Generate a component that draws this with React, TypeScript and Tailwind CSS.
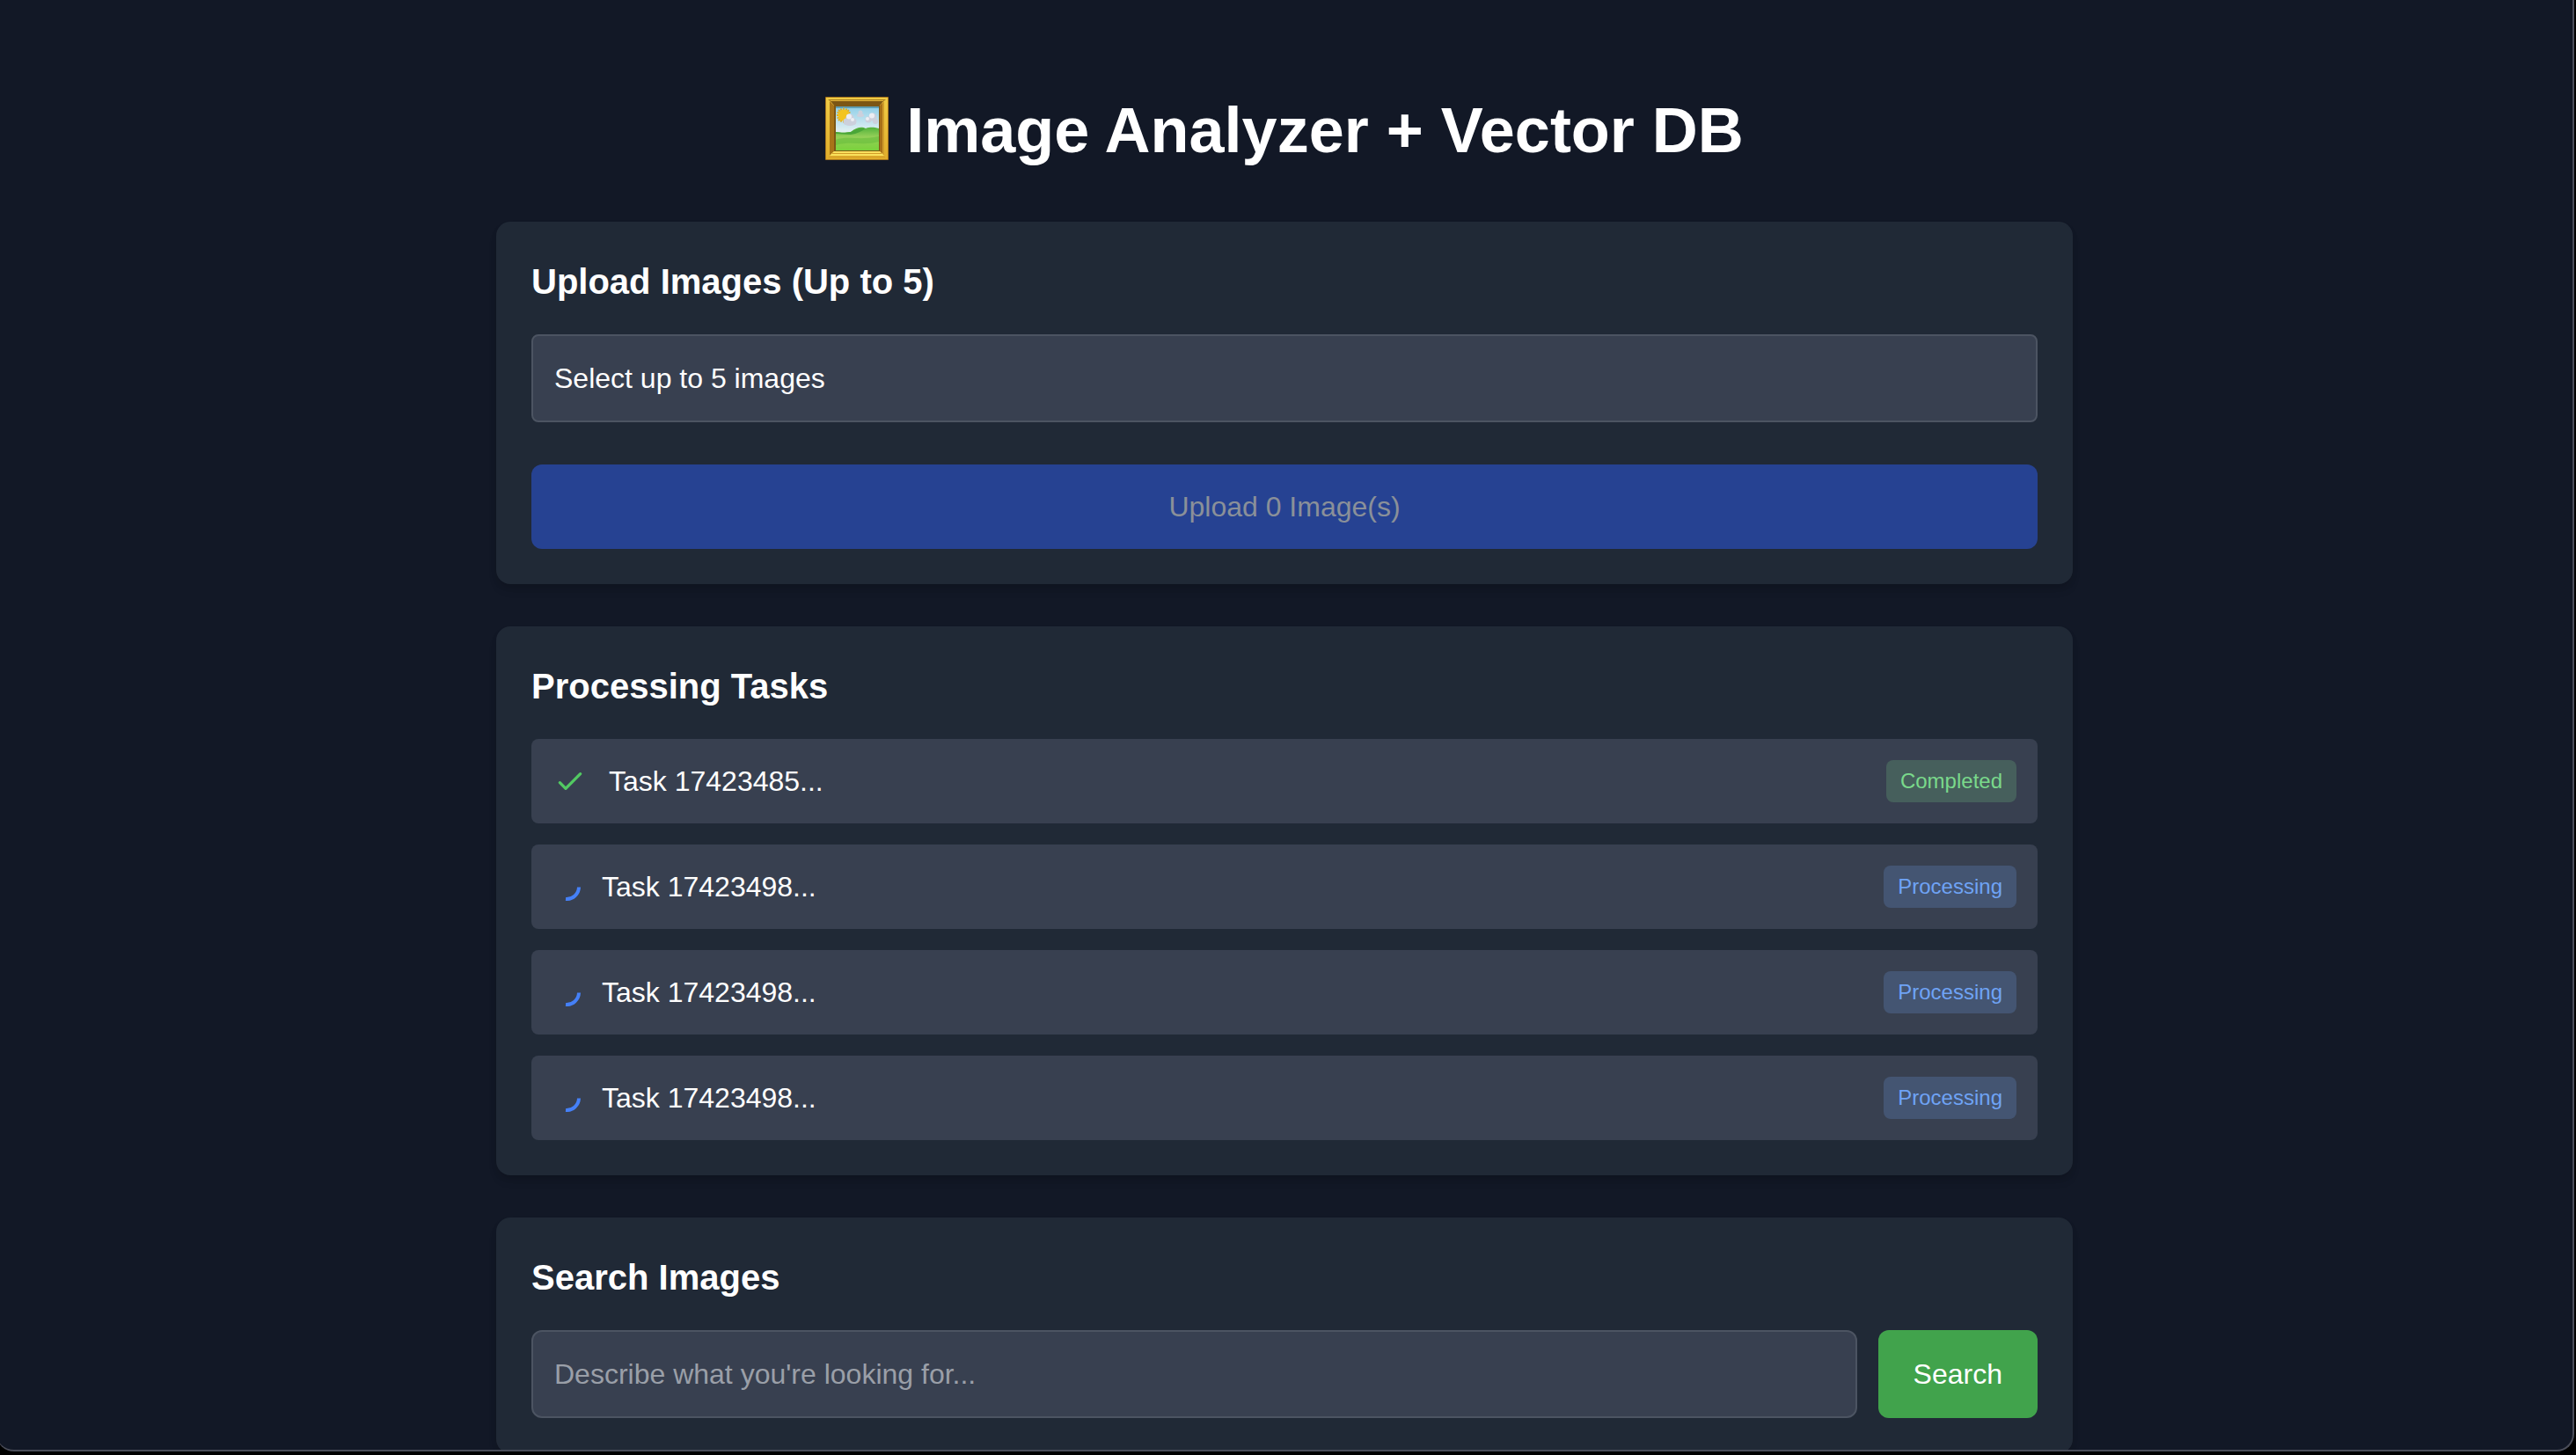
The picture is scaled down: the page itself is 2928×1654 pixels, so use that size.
import { useId } from "react";

type Task = { id: string; label: string; status: "Completed" | "Processing" };

const tasks: Task[] = [
  { id: "t1", label: "Task 17423485...", status: "Completed" },
  { id: "t2", label: "Task 17423498...", status: "Processing" },
  { id: "t3", label: "Task 17423498...", status: "Processing" },
  { id: "t4", label: "Task 17423498...", status: "Processing" },
];

function FramedPicture() {
  return (
    <svg className="mb-1 h-[72px] w-[72px] shrink-0" viewBox="0 0 72 72" aria-hidden="true">
      <defs>
        <linearGradient id="sky" x1="0" y1="0" x2="0" y2="1">
          <stop offset="0" stopColor="#8fcfe8" />
          <stop offset="0.6" stopColor="#e6f1f2" />
        </linearGradient>
        <linearGradient id="grass" x1="0" y1="0" x2="0" y2="1">
          <stop offset="0" stopColor="#52b23c" />
          <stop offset="0.4" stopColor="#93cf58" />
          <stop offset="1" stopColor="#7bd23c" />
        </linearGradient>
        <linearGradient id="gold" x1="0" y1="0" x2="0" y2="1">
          <stop offset="0" stopColor="#efcb45" />
          <stop offset="1" stopColor="#e0ad2b" />
        </linearGradient>
      </defs>
      <rect width="72" height="72" rx="1" fill="#a8741a" />
      <rect x="1" y="1" width="70" height="70" fill="url(#gold)" />
      <path d="M3 3H69L65 6H7Z" fill="#a87d20" />
      <path d="M6 5H66L61 11H11Z" fill="#7c5614" />
      <path d="M6 4H66V5H6Z" fill="#e3b63a" />
      <path d="M5 5L11 11V61L5 67Z" fill="#a87418" />
      <path d="M67 5L61 11V61L67 67Z" fill="#cf9c2a" />
      <path d="M65 7L61 11V61L65 65Z" fill="#a87018" />
      <path d="M5 67L11 61H61L67 67Z" fill="#f9e05c" />
      <path d="M8 64H64V65H8ZM4 68H68V69H4Z" fill="#d39c28" />
      <rect x="10" y="10" width="52" height="52" fill="#7d5816" />
      <rect x="12" y="11" width="49" height="50" fill="url(#sky)" />
      <path d="M12 11H61V13H12Z" fill="#5f9fb5" />
      <path
        d="M21 12.500V29.500M13 21H29M15 15L27 27M27 15L15 27M17.500 13.500L24.500 28.500M24.500 13.500L17.500 28.500M13.500 17.500L28.500 24.500M13.500 24.500L28.500 17.500"
        stroke="#e3ae1c"
        strokeWidth="1.8"
      />
      <circle cx="21" cy="21" r="6.500" fill="#f3c41f" />
      <g fill="#ccd0dc">
        <circle cx="28" cy="24" r="4.500" />
        <circle cx="32" cy="28" r="3.500" />
        <circle cx="24" cy="28" r="3.500" />
        <ellipse cx="28" cy="30" rx="7" ry="3" />
        <circle cx="54" cy="23" r="4.500" />
        <circle cx="49" cy="26" r="3.500" />
        <circle cx="57" cy="28" r="3" />
        <circle cx="40" cy="18" r="2.500" />
        <ellipse cx="40" cy="21" rx="4" ry="2" />
      </g>
      <g fill="#eceef3">
        <circle cx="27" cy="22.500" r="3" />
        <circle cx="31" cy="26" r="2" />
        <circle cx="53" cy="21.500" r="3" />
        <circle cx="48" cy="25" r="2" />
      </g>
      <path d="M12 40C19 41 22 41 29 40C36 34 42 34 46 36C52 34 56 35 61 36V61H12Z" fill="url(#grass)" />
      <path d="M29 40C36 35 40 36 46 36C42 39 36 42 29 43C23 43 17 42 12 42V40C19 41 22 41 29 40Z" fill="#4aa638" />
      <path d="M12 49C26 44 38 50 61 45V51C44 56 29 50 12 55Z" fill="#62b93a" opacity="0.5" />
    </svg>
  );
}

function CheckIcon() {
  return (
    <svg className="size-10 text-[#52c962]" viewBox="0 0 24 24" fill="none" stroke="currentColor" strokeWidth="2" strokeLinecap="round" strokeLinejoin="round" aria-hidden="true">
      <path d="M5 13l4 4L19 7" />
    </svg>
  );
}

function Spinner() {
  return (
    <svg className="size-8 text-[#4580f7]" viewBox="0 0 32 32" fill="none" stroke="currentColor" strokeWidth="4" aria-hidden="true">
      <path d="M30 16.500A14 14 0 0 1 15 30" />
    </svg>
  );
}

function Card({ title, labelFor, children }: { title: string; labelFor?: string; children: React.ReactNode }) {
  return (
    <section className="rounded-2xl bg-[#202936] p-10 shadow-[0_8px_12px_-2px_rgba(0,0,0,0.1),0_4px_8px_-2px_rgba(0,0,0,0.1)]">
      <h2 className="mb-8 text-[40px] leading-[56px] font-bold">
        {labelFor ? <label htmlFor={labelFor}>{title}</label> : title}
      </h2>
      {children}
    </section>
  );
}

export default function App() {
  const fileId = useId();
  const searchId = useId();
  return (
    <div className="h-screen overflow-hidden bg-black pr-0.5 pb-1 font-['Liberation_Sans',Arial,sans-serif] text-[32px] leading-[48px] text-white">
      <div className="-ml-1 h-full overflow-hidden rounded-b-[20px] border-r-2 border-b-2 border-[#4a4d59] bg-[#121826]">
        <main className="px-8 pt-[108px]">
          <div className="mx-auto flex max-w-[1792px] flex-col gap-12">
            <h1 className="mb-4 flex items-center justify-center gap-5 text-[72px] leading-[80px] font-bold">
              <FramedPicture />
              <span>Image Analyzer + Vector DB</span>
            </h1>

            <Card title="Upload Images (Up to 5)">
              <label htmlFor={fileId} className="block cursor-pointer rounded-lg border-2 border-[#4c5462] bg-[#384050] px-6 py-6">
                Select up to 5 images
              </label>
              <input id={fileId} type="file" multiple accept="image/*" className="hidden" />
              <button type="button" disabled className="mt-12 block w-full rounded-xl bg-[#264292] py-6 text-[#8a9099]">
                Upload 0 Image(s)
              </button>
            </Card>

            <Card title="Processing Tasks">
              <ul className="flex flex-col gap-6">
                {tasks.map((task) => (
                  <li key={task.id} className="flex items-center justify-between rounded-lg bg-[#384050] p-6">
                    <div className="flex items-center gap-6">
                      {task.status === "Completed" ? <CheckIcon /> : <Spinner />}
                      <span>{task.label}</span>
                    </div>
                    <span
                      className={
                        task.status === "Completed"
                          ? "rounded-lg bg-[#465f5c] px-4 py-2 text-2xl leading-8 text-[#7ad98b]"
                          : "rounded-lg bg-[#445572] px-4 py-2 text-2xl leading-8 text-[#6fa3f5]"
                      }
                    >
                      {task.status}
                    </span>
                  </li>
                ))}
              </ul>
            </Card>

            <Card title="Search Images" labelFor={searchId}>
              <form className="flex gap-6" onSubmit={(e) => e.preventDefault()}>
                <input
                  id={searchId}
                  type="text"
                  placeholder="Describe what you're looking for..."
                  className="min-w-0 flex-1 rounded-xl border-2 border-[#4c5462] bg-[#384050] px-6 py-6 placeholder:text-[#9a9fa8]"
                />
                <button type="submit" className="rounded-xl bg-[#41a34c] px-10">
                  Search
                </button>
              </form>
            </Card>
          </div>
        </main>
      </div>
    </div>
  );
}
